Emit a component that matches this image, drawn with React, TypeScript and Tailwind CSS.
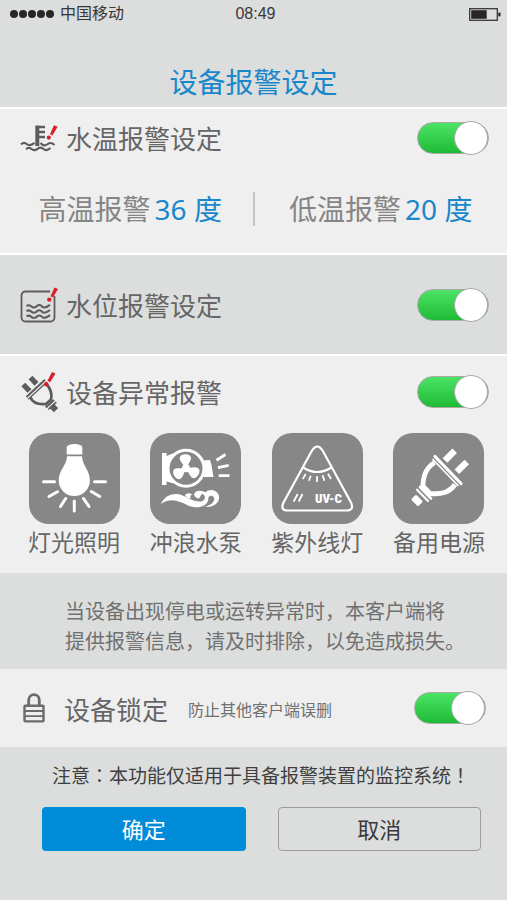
import { useState } from 'react';
import type { ReactNode } from 'react';

interface Device {
  name: string;
  icon: ReactNode;
}

/* ---------- Row icons ---------- */

function WaterTempIcon() {
  return (
    <svg width="38" height="28" viewBox="0 0 38 28" fill="none" aria-hidden="true">
      <g stroke="#5c5c5c" strokeWidth="2.1">
        <path d="M17.3 1.5V22" strokeWidth="4" />
        <path d="M19 3H25M19 8H25M19 13H25" strokeWidth="2.4" />
        <path d="M1 20.5C3 18.5 5 18.5 7 20.3S11 21.5 14.5 18.8" />
        <path d="M20.5 19C23 22 25.5 21.8 27.5 20.2S32 18.5 34.5 21" />
        <path d="M6 25.2C8 23.2 9.5 23.4 11.5 25S15.5 26.3 17.5 24.8S21.5 23.2 23.5 25S28 26.2 30.5 24" />
      </g>
      <path d="M34 1.3L37.6 2.7L32.4 11.4L30 10.2Z" fill="#d8202c" />
      <circle cx="28.8" cy="13.6" r="2.1" fill="#d8202c" />
    </svg>
  );
}

function WaterLevelIcon() {
  return (
    <svg width="38" height="38" viewBox="0 0 38 38" fill="none" aria-hidden="true">
      <path
        d="M30 5.5H5.5a4 4 0 0 0-4 4V31.5a4 4 0 0 0 4 4H30.5a4 4 0 0 0 4-4V10"
        stroke="#5c5c5c"
        strokeWidth="1.8"
      />
      <g stroke="#5c5c5c" strokeWidth="2.1">
        <path d="M6.5 20C8.5 18.7 10 19 11.5 20.5S15.5 21.5 17 20S20.5 18.8 22 20.5S26.5 21.5 30 18.8" />
        <path d="M6.5 25.2C8.5 23.9 10 24.2 11.5 25.7S15.5 26.7 17 25.2S20.5 24 22 25.7S26.5 26.7 30 24" />
        <path d="M6.5 30.4C8.5 29.1 10 29.4 11.5 30.9S15.5 31.9 17 30.4S20.5 29.2 22 30.9S26.5 31.9 30 29.2" />
      </g>
      <path d="M34.5 1.5L38 3L33 11.5L30.5 10.3Z" fill="#d8202c" />
      <circle cx="29.3" cy="13.6" r="2.2" fill="#d8202c" />
    </svg>
  );
}

function PlugAlertIcon() {
  return (
    <svg width="38" height="42" viewBox="0 0 38 42" fill="none" aria-hidden="true">
      <g stroke="#5c5c5c">
        <path d="M3.3 13.5L9.5 20M10.5 6.5L16.5 12.8" strokeWidth="5.4" />
        <path d="M6.5 26L25 8.7" strokeWidth="2" />
        <path d="M8.3 28.3L26.8 11" strokeWidth="1.3" />
        <path d="M10.5 26.5C13 32.5 18 33.8 26 33L31 28.5C32.5 22 30 17 26.5 13" strokeWidth="2.8" />
        <path d="M25.8 36.5L34 29" strokeWidth="2.2" />
        <path d="M28.3 38.5L36.3 31.2" strokeWidth="1.6" />
        <path d="M31.5 34.5L36 39.2" strokeWidth="6" />
      </g>
      <path d="M32 1L35.5 2.4L30.2 11.2L27.5 9.8Z" fill="#d8202c" />
      <circle cx="26.3" cy="13.2" r="2.2" fill="#d8202c" />
    </svg>
  );
}

function LockIcon() {
  return (
    <svg width="24" height="30" viewBox="0 0 24 30" fill="none" stroke="#6b6b6b" aria-hidden="true">
      <path d="M6.7 12V7a5.3 5.3 0 0 1 10.6 0V12" strokeWidth="2.8" />
      <rect x="2.5" y="12.8" width="19" height="15.6" rx="0.8" strokeWidth="2.4" />
      <path d="M3 18H21M3 23.2H21" strokeWidth="1.8" />
    </svg>
  );
}

/* ---------- Device tile drawings, all on a 91 x 91 canvas ---------- */

function BulbDrawing() {
  return (
    <svg viewBox="0 0 91 91" aria-hidden="true">
      <path
        d="M37.7 21.5V14.5Q37.7 12.7 39.5 12.3Q45.5 9.5 51.5 12.3Q53.3 12.7 53.3 14.5V21.5Z"
        fill="#fff"
      />
      <path
        d="M38 23.3H53C53 32 60.9 37 60.9 47.5A15.6 15.6 0 0 1 29.7 47.5C29.7 37 38 32 38 23.3Z"
        fill="#fff"
      />
      <path
        d="M14.5 48.7H25.5M65.5 48.7H76.5M20 63.5L28.5 58.7M70.7 63.5L62.3 58.5M31.5 73.5L36.7 65.5M60 73.5L54.5 65.5M45.3 68V78"
        stroke="#fff"
        strokeWidth="3"
        strokeLinecap="round"
      />
    </svg>
  );
}

function PumpDrawing() {
  const blade = 'M34.5 33C31 29.5 28 25.5 31 22.6C34.5 20.3 40.2 21.2 41 24.5C41.3 28 38 30 38 33Z';
  return (
    <svg viewBox="0 0 91 91" aria-hidden="true">
      <path d="M12 20H16.5V23L24 20L20 27L17.5 35.5L20 44L24 50.5L16.5 48.5V52H12Z" fill="#fff" />
      <circle cx="36" cy="35.3" r="18" fill="none" stroke="#fff" strokeWidth="3" />
      <g fill="#fff">
        <circle cx="36" cy="35.3" r="4" />
        <path d={blade} />
        <path d={blade} transform="rotate(120 36 35.3)" />
        <path d={blade} transform="rotate(240 36 35.3)" />
        <path d="M53.5 27.5L60 27L61.5 32L63.5 44H53.5Q57 35 53.5 27.5Z" />
      </g>
      <path
        d="M66.5 27.3L75.5 21.5M68 34.7L78.7 32.3M68.7 42.7H79.5"
        stroke="#fff"
        strokeWidth="2.8"
      />
      <g fill="#fff">
        <path d="M11 71C14 64 20 60.5 27 61C35 61.7 40 68 49 68.5C53.5 68.7 56 66 54.5 62.5C53 60 49 60.5 48.5 63.5C46 60.5 48 57.5 52 58C57.5 59 60 64.5 57.5 69C54 75 45 75.5 38 72.5C30 68.5 21 64 11 71Z" />
        <path d="M35 62.5C36.5 60 40 59.5 42.5 62C40.5 61.7 39.5 63 41 65C39 65.5 36.5 64.5 35 62.5Z" />
        <path d="M44 61.5C45 58 49.5 56.7 53 59L49 65.5C46.5 65.3 44.5 64 44 61.5Z" />
        <path d="M55 60C57.5 55.8 66 55.5 68.7 62C71 69 64 75 54.5 73.8C61 72.5 65.5 68.5 64 64.5C62.5 62 59.5 62.5 58.5 64.5C57.5 62.5 56.8 61 55 60Z" />
      </g>
    </svg>
  );
}

function UvDrawing() {
  return (
    <svg viewBox="0 0 91 91" aria-hidden="true">
      <g fill="none" stroke="#fff" strokeWidth="2.2">
        <path d="M40 17.5Q45.3 9.5 50.6 17.5L79 69.5Q82.5 77.5 74.5 77.5H15.5Q8 77.5 11.5 69.5Z" />
        <path d="M31.3 34.5Q45 43.5 59.3 34.5" />
      </g>
      <path
        d="M33.7 41L30.7 46M38.7 42.7L37 47.7M45 43.3V49M50.7 42.3L52.3 47.7M56 40.7L59 46M25.7 61L21.7 68.5M30.5 61L26.7 68.5"
        stroke="#fff"
        strokeWidth="1.8"
      />
      <text
        x="43"
        y="70"
        fill="#fff"
        className="font-['Roboto_Condensed','Liberation_Sans',sans-serif] text-[13px] font-black"
      >
        UV-C
      </text>
    </svg>
  );
}

function PlugDrawing() {
  return (
    <svg viewBox="0 0 91 91" fill="none" stroke="#fff" aria-hidden="true">
      <path d="M52 27.5L61.7 17.8M63.8 38.8L73.8 29" strokeWidth="6.5" />
      <path d="M42 23.5L68 50.5" strokeWidth="3.2" strokeLinecap="round" />
      <path d="M39.5 26L65.5 53" strokeWidth="1.8" />
      <path d="M41.5 29.5C32 36 30.5 43 29.8 53L37 60.5C48 61.5 56 60 62 51.5" strokeWidth="4.8" />
      <path d="M27 54L38 65.5" strokeWidth="2.6" strokeLinecap="round" />
      <path d="M24 56.7L35 68" strokeWidth="2.2" strokeLinecap="round" />
      <path d="M25.5 65.5L22.5 68.5" strokeWidth="7" strokeLinejoin="round" />
      <path d="M20 66.5L25 71.5L28 68.5L23 63.5Z" fill="#fff" strokeWidth="3" strokeLinejoin="round" />
    </svg>
  );
}

const DEVICES: Device[] = [
  { name: '灯光照明', icon: <BulbDrawing /> },
  { name: '冲浪水泵', icon: <PumpDrawing /> },
  { name: '紫外线灯', icon: <UvDrawing /> },
  { name: '备用电源', icon: <PlugDrawing /> },
];

/* ---------- Shared pieces ---------- */

function Toggle({ id }: { id: string }) {
  const [on, setOn] = useState(true);
  return (
    <input
      id={id}
      type="checkbox"
      role="switch"
      checked={on}
      onChange={(e) => setOn(e.target.checked)}
      className="flex h-8 w-[72px] shrink-0 cursor-pointer appearance-none items-center rounded-full border border-[#a9aba9] bg-[#c8c8c8] before:size-[34px] before:shrink-0 before:rounded-full before:border before:border-[#a9a9a9] before:bg-white checked:justify-end checked:bg-linear-to-b checked:from-[#4be364] checked:to-[#1dbb35]"
    />
  );
}

function SettingRow({ id, label, icon }: { id: string; label: string; icon: ReactNode }) {
  return (
    <div className="flex items-center pr-[18px] pl-5">
      <span className="flex w-[38px] shrink-0 justify-center">{icon}</span>
      <label htmlFor={id} className="ml-2 flex-1 pt-[2px] text-[26px] leading-9 text-[#666]">
        {label}
      </label>
      <Toggle id={id} />
    </div>
  );
}

function Threshold({ label, value }: { label: string; value: number }) {
  return (
    <p className="flex items-center justify-center gap-1 text-[28px] leading-9 whitespace-nowrap">
      <span className="text-[#858585]">{label}</span>
      <span className="text-[#1a87ca]">{value} 度</span>
    </p>
  );
}

export default function App() {
  return (
    <div className="min-h-screen bg-[#dcdedd] font-['Noto_Sans','Noto_Sans_CJK_SC',sans-serif]">
      <header>
        <div className="grid h-7 grid-cols-3 items-center pr-[6px] pl-[10px] font-['Liberation_Sans','Noto_Sans_CJK_SC',sans-serif] text-base text-[#3a3636]">
          <div className="flex items-center gap-[6px]">
            <span className="flex gap-px">
              {[1, 2, 3, 4, 5].map((n) => (
                <span key={n} className="size-2 rounded-full bg-[#2b2626]" />
              ))}
            </span>
            <span>中国移动</span>
          </div>
          <span className="text-center">08:49</span>
          <svg className="justify-self-end" width="32" height="13" viewBox="0 0 32 13" aria-hidden="true">
            <rect x="0.7" y="0.7" width="27.6" height="11.6" fill="none" stroke="#3a3636" strokeWidth="1.3" />
            <rect x="2.2" y="2.2" width="15.5" height="8.6" fill="#2b2626" />
            <rect x="29.3" y="4.5" width="2.2" height="4" rx="0.8" fill="#2b2626" />
          </svg>
        </div>
        <h1 className="flex h-[79px] items-end justify-center pb-[5px] text-[28px] leading-10 text-[#1a87ca]">
          设备报警设定
        </h1>
      </header>

      <section className="border-y-2 border-white bg-[#efefef]">
        <div className="pt-[10px]">
          <SettingRow id="water-temp" label="水温报警设定" icon={<WaterTempIcon />} />
        </div>
        <div className="grid h-24 grid-cols-[1fr_2px_1fr] items-center pt-2">
          <div className="pl-2">
            <Threshold label="高温报警" value={36} />
          </div>
          <span className="h-[34px] bg-[#c4c4c4]" />
          <Threshold label="低温报警" value={20} />
        </div>
      </section>

      <section className="flex h-[99px] flex-col justify-center">
        <SettingRow id="water-level" label="水位报警设定" icon={<WaterLevelIcon />} />
      </section>

      <section className="border-t-2 border-white bg-[#efefef] py-[15px]">
        <SettingRow id="device-fault" label="设备异常报警" icon={<PlugAlertIcon />} />
        <ul className="mt-5 flex justify-between pr-[22px] pl-7">
          {DEVICES.map((device) => (
            <li key={device.name} className="flex flex-col items-center">
              <div className="size-[91px] rounded-[20px] bg-[#878787]">{device.icon}</div>
              <span className="mt-[2px] text-[23px] leading-8 text-[#666]">{device.name}</span>
            </li>
          ))}
        </ul>
      </section>

      <p className="px-[65px] pt-6 pb-3 text-[20px] leading-[30px] whitespace-nowrap text-[#707070]">
        当设备出现停电或运转异常时，本客户端将
        <br />
        提供报警信息，请及时排除，以免造成损失。
      </p>

      <section className="flex h-[78px] items-center bg-[#efefef] pr-[21px] pl-[22px]">
        <LockIcon />
        <label htmlFor="device-lock" className="ml-[18px] pt-1 text-[26px] leading-9 text-[#666]">
          设备锁定
        </label>
        <span className="ml-5 flex-1 pt-1 text-base text-[#707070]">防止其他客户端误删</span>
        <Toggle id="device-lock" />
      </section>

      <footer className="pt-[14px] pr-[26px] pb-12 pl-[42px]">
        <p className="pl-[10px] text-[19px] leading-7 whitespace-nowrap text-[#3f3f3f]">
          注意<span className="font-['Noto_Sans_CJK_TC',sans-serif]">：</span>
          本功能仅适用于具备报警装置的监控系统
          <span className="font-['Noto_Sans_CJK_TC',sans-serif]">！</span>
        </p>
        <div className="mt-[17px] grid grid-cols-2 gap-8">
          <button type="button" className="h-11 rounded-[4px] bg-[#008cd8] text-[22px] text-white">
            确定
          </button>
          <button type="button" className="h-11 rounded-[4px] border border-[#9c9c9c] text-[22px] text-[#3a3a3a]">
            取消
          </button>
        </div>
      </footer>
    </div>
  );
}
